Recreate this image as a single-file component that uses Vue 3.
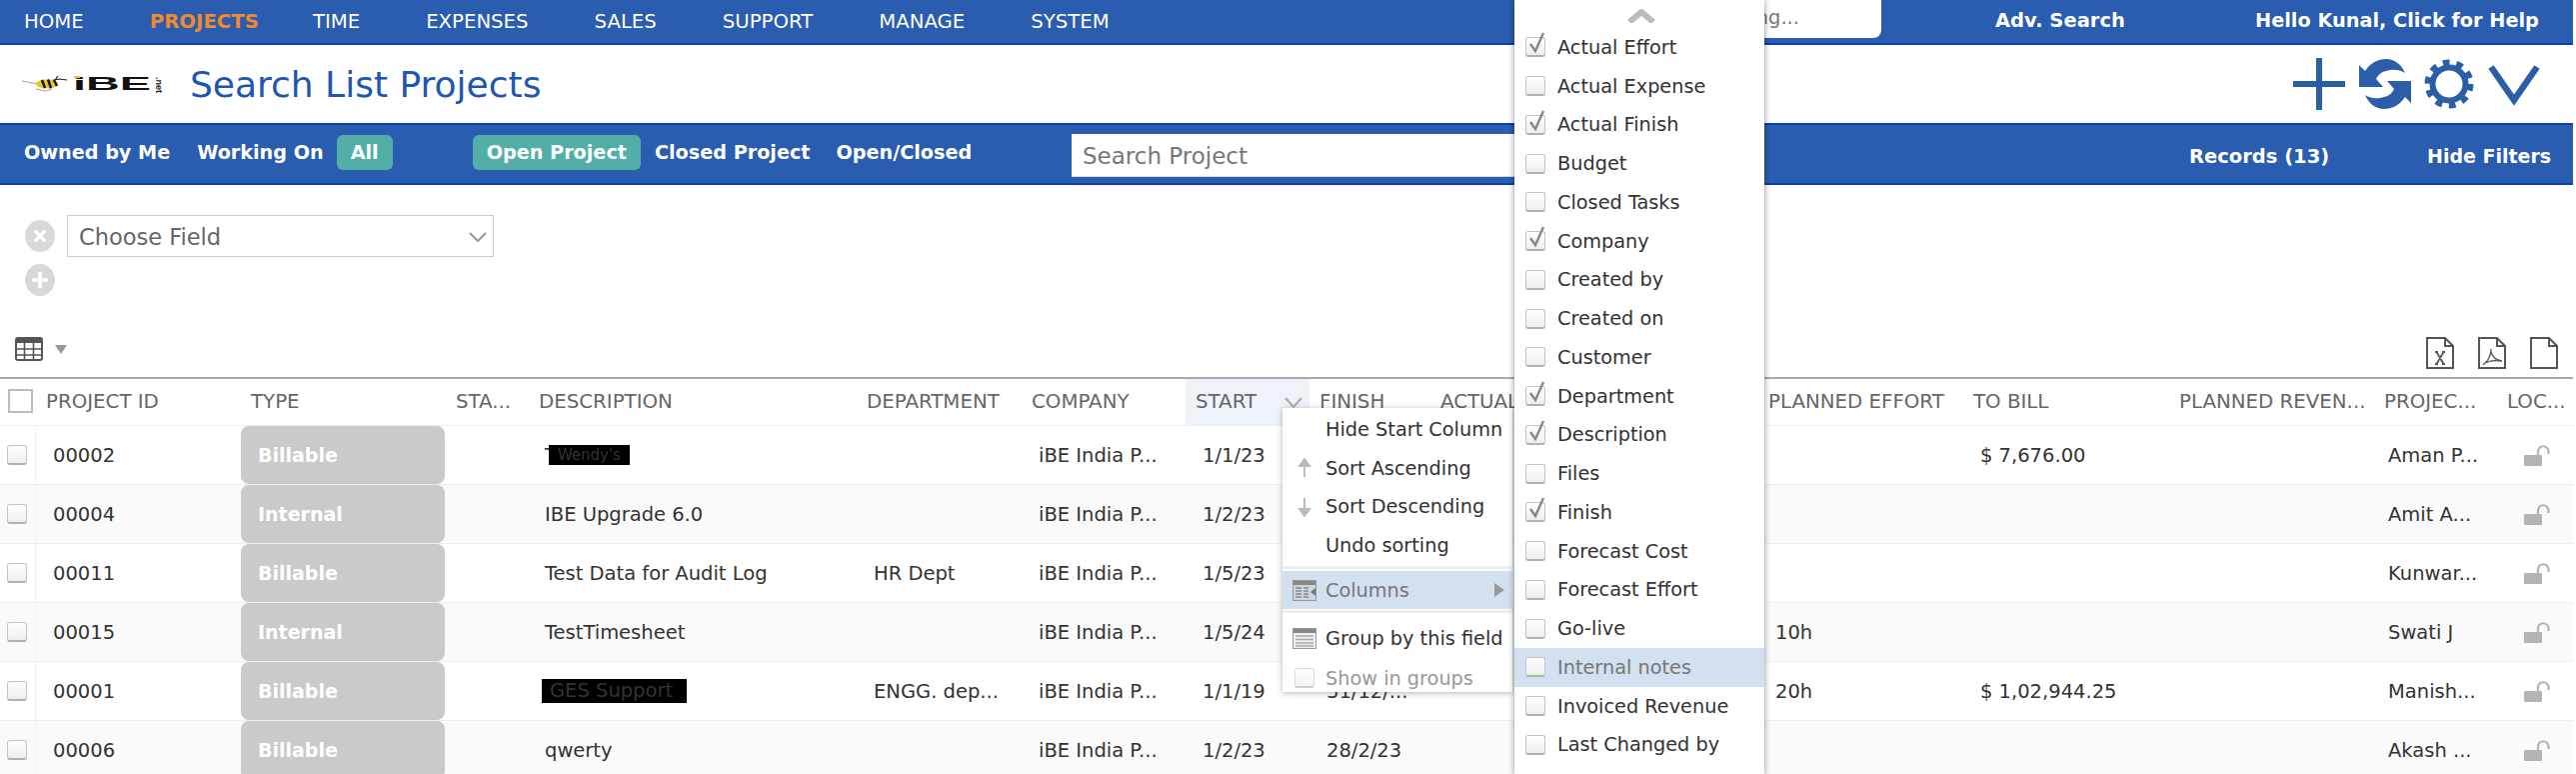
<script setup>
import { ref } from 'vue'

const navItems = ['HOME', 'PROJECTS', 'TIME', 'EXPENSES', 'SALES', 'SUPPORT', 'MANAGE', 'SYSTEM']
const columns = [
  'PROJECT ID', 'TYPE', 'STA...', 'DESCRIPTION', 'DEPARTMENT', 'COMPANY', 'START', 'FINISH',
  'ACTUAL', 'PLANNED EFFORT', 'TO BILL', 'PLANNED REVEN...', 'PROJEC...', 'LOC...'
]

// finish values of the first rows sit behind the open menu
const rows = ref([
  { id: '00002', type: 'Billable', desc: 'T', hidden: 'Wendy\'s', dept: '', start: '1/1/23', finish: '', effort: '', bill: '$ 7,676.00', owner: 'Aman P...' },
  { id: '00004', type: 'Internal', desc: 'IBE Upgrade 6.0', dept: '', start: '1/2/23', finish: '', effort: '', bill: '', owner: 'Amit A...' },
  { id: '00011', type: 'Billable', desc: 'Test Data for Audit Log', dept: 'HR Dept', start: '1/5/23', finish: '', effort: '', bill: '', owner: 'Kunwar...' },
  { id: '00015', type: 'Internal', desc: 'TestTimesheet', dept: '', start: '1/5/24', finish: '', effort: '10h', bill: '', owner: 'Swati J' },
  { id: '00001', type: 'Billable', hiddenOnly: 'GES Support', dept: 'ENGG. dep...', start: '1/1/19', finish: '31/12/...', effort: '20h', bill: '$ 1,02,944.25', owner: 'Manish...' },
  { id: '00006', type: 'Billable', desc: 'qwerty', dept: '', start: '1/2/23', finish: '28/2/23', effort: '', bill: '', owner: 'Akash ...' }
])

const columnOptions = ref([
  { label: 'Actual Effort', on: true },
  { label: 'Actual Expense', on: false },
  { label: 'Actual Finish', on: true },
  { label: 'Budget', on: false },
  { label: 'Closed Tasks', on: false },
  { label: 'Company', on: true },
  { label: 'Created by', on: false },
  { label: 'Created on', on: false },
  { label: 'Customer', on: false },
  { label: 'Department', on: true },
  { label: 'Description', on: true },
  { label: 'Files', on: false },
  { label: 'Finish', on: true },
  { label: 'Forecast Cost', on: false },
  { label: 'Forecast Effort', on: false },
  { label: 'Go-live', on: false },
  { label: 'Internal notes', on: false, hover: true },
  { label: 'Invoiced Revenue', on: false },
  { label: 'Last Changed by', on: false },
  { label: '', on: false }
])
</script>

<template>
  <div class="page">
    <header class="nav">
      <a v-for="item in navItems" :key="item" class="nav-link" :class="{ active: item === 'PROJECTS' }">{{ item }}</a>
      <div class="nav-search">Searching...</div>
      <a class="nav-strong adv">Adv. Search</a>
      <a class="nav-strong hello">Hello Kunal, Click for Help</a>
    </header>

    <div class="title-bar">
      <svg class="logo" viewBox="0 0 146 18" width="146" height="18">
        <path d="M0 6 L16 9 M14 14 L24 16 L30 14" stroke="#888" stroke-width="0.8" fill="none" />
        <path d="M27 6 L37 4 L45 5 M33 5 L36 1" stroke="#222" stroke-width="1.2" fill="none" />
        <ellipse cx="25" cy="9" rx="11" ry="4.6" fill="#e8c91e" />
        <path d="M20 5 L23 13 M26 4.5 L29 13 M32 5 L35 11" stroke="#111" stroke-width="2.4" />
        <text x="51" y="15" class="logo-text" textLength="78" lengthAdjust="spacingAndGlyphs">iBE</text>
        <rect x="52" y="1" width="6" height="2" fill="#f2c81c" />
        <text x="0" y="0" class="logo-net" transform="translate(134 2) rotate(90)">.net</text>
      </svg>
      <h1 class="title">Search List Projects</h1>
      <div class="tools">
        <svg viewBox="0 0 52 52" width="52" height="52"><path d="M0 23h52v6H0zM23 0h6v52h-6z" fill="#2a5fa8" /></svg>
        <svg class="sync" viewBox="0 0 52 52" width="52" height="52" fill="#2a5fa8">
          <path d="M0 7 L6 13 C11 5 19 1 27 1 C35 1 42 6 46 15 C40 11 33 11 27 13 C22 14 19 17 17 21 L24 29 L0 29 Z" />
          <path d="M0 7 L6 13 C11 5 19 1 27 1 C35 1 42 6 46 15 C40 11 33 11 27 13 C22 14 19 17 17 21 L24 29 L0 29 Z" transform="rotate(180 26 26)" />
        </svg>
        <svg viewBox="0 0 52 52" width="52" height="52" fill="none" stroke="#2a5fa8">
          <circle cx="26" cy="26" r="16.5" stroke-width="6" />
          <circle cx="26" cy="26" r="21.5" stroke-width="6" stroke-dasharray="6.75 6.75" />
        </svg>
        <svg viewBox="0 0 52 52" width="52" height="52" fill="none" stroke="#2a5fa8">
          <path d="M3 9 L26 42 L49 9" stroke-width="6.5" />
        </svg>
      </div>
    </div>

    <div class="filter-bar">
      <a class="tab">Owned by Me</a>
      <a class="tab tab-working">Working On</a>
      <a class="tab pill">All</a>
      <a class="tab pill pill-open">Open Project</a>
      <a class="tab tab-closed">Closed Project</a>
      <a class="tab tab-both">Open/Closed</a>
      <div class="search-box">Search Project</div>
      <a class="tab records">Records (13)</a>
      <a class="tab hide-filters">Hide Filters</a>
    </div>

    <section class="filter-panel">
      <div class="filter-row">
        <span class="round-btn">
          <svg viewBox="0 0 30 30" width="20" height="20"><path d="M7 7 L23 23 M23 7 L7 23" stroke="#fff" stroke-width="5" /></svg>
        </span>
        <div class="choose">
          <span>Choose Field</span>
          <svg viewBox="0 0 18 10" width="18" height="10" fill="none"><path d="M1 1 L9 9 L17 1" stroke="#999" stroke-width="2" /></svg>
        </div>
      </div>
      <span class="round-btn add-btn">
        <svg viewBox="0 0 30 30" width="22" height="22"><path d="M15 4 V26 M4 15 H26" stroke="#fff" stroke-width="5" /></svg>
      </span>
    </section>

    <div class="grid-tools">
      <svg class="grid-icon" viewBox="0 0 28 24" width="28" height="24">
        <rect x="1" y="1" width="26" height="22" rx="2" fill="#fff" stroke="#555" stroke-width="2" />
        <rect x="1" y="1" width="26" height="5" fill="#555" />
        <path d="M1 12 H27 M1 18 H27 M9.5 6 V23 M18.5 6 V23" stroke="#555" stroke-width="1.6" />
      </svg>
      <span class="caret"></span>
      <div class="export">
        <svg viewBox="0 0 28 32" width="28" height="32" fill="none" stroke="#555" stroke-width="2">
          <path d="M1 1 H19 L27 9 V31 H1 Z M19 1 V9 H27" />
          <path d="M9 15 H12 M16 15 H19 M9 27 H12 M16 27 H19 M10.5 15 L17.5 27 M17.5 15 L10.5 27" stroke-width="1.8" />
        </svg>
        <svg viewBox="0 0 28 32" width="28" height="32" fill="none" stroke="#555" stroke-width="2">
          <path d="M1 1 H19 L27 9 V31 H1 Z M19 1 V9 H27" />
          <path d="M13 12 C13 18 10 24 5 28 M13 15 C15 21 18 23 24 24 C18 23 11 24 7 26" stroke-width="1.3" />
        </svg>
        <svg viewBox="0 0 28 32" width="28" height="32" fill="none" stroke="#555" stroke-width="2">
          <path d="M1 1 H19 L27 9 V31 H1 Z M19 1 V9 H27" />
        </svg>
      </div>
    </div>

    <div class="table">
      <div class="row head">
        <div class="cell check-cell"><span class="box box-head"></span></div>
        <div v-for="col in columns" :key="col" class="cell" :class="{ sorted: col === 'START' }">
          {{ col }}
          <svg v-if="col === 'START'" class="head-chevron" viewBox="0 0 18 12" width="18" height="12" fill="none">
            <path d="M1 1 L9 10 L17 1" stroke="#aaa" stroke-width="2" />
          </svg>
        </div>
      </div>
      <div v-for="(row, i) in rows" :key="row.id" class="row body-row" :class="{ odd: i % 2 === 1 }">
        <div class="cell check-cell line"><span class="box"></span></div>
        <div class="cell val">{{ row.id }}</div>
        <div class="cell badge-cell"><span class="badge">{{ row.type }}</span></div>
        <div class="cell val"></div>
        <div class="cell val desc">
          {{ row.desc }}<span v-if="row.hidden" class="blackout small">{{ row.hidden }}</span>
          <span v-if="row.hiddenOnly" class="blackout big">{{ row.hiddenOnly }}</span>
        </div>
        <div class="cell val">{{ row.dept }}</div>
        <div class="cell val">iBE India P...</div>
        <div class="cell val">{{ row.start }}</div>
        <div class="cell val">{{ row.finish }}</div>
        <div class="cell val"></div>
        <div class="cell val">{{ row.effort }}</div>
        <div class="cell val">{{ row.bill }}</div>
        <div class="cell val"></div>
        <div class="cell val owner">{{ row.owner }}</div>
        <div class="cell lock-cell">
          <svg viewBox="0 0 26 21" width="26" height="21" fill="none">
            <rect x="0" y="10" width="18" height="11" rx="1" fill="#b4b4b4" />
            <path d="M14 10 V6.5 A5 5 0 0 1 24.5 6.5 V9" stroke="#b4b4b4" stroke-width="2.2" />
          </svg>
        </div>
      </div>
    </div>

    <!-- header context menu, sits over the table -->
    <div class="menu">
      <div class="menu-item"><span class="menu-ico"></span>Hide Start Column</div>
      <div class="menu-item">
        <span class="menu-ico">
          <svg viewBox="0 0 14 20" width="14" height="20"><path d="M7 19 V6 M2 8 L7 1 L12 8 Z" stroke="#bbb" stroke-width="2" fill="#bbb" /></svg>
        </span>
        Sort Ascending
      </div>
      <div class="menu-item">
        <span class="menu-ico">
          <svg viewBox="0 0 14 20" width="14" height="20"><path d="M7 1 V14 M2 12 L7 19 L12 12 Z" stroke="#bbb" stroke-width="2" fill="#bbb" /></svg>
        </span>
        Sort Descending
      </div>
      <div class="menu-item"><span class="menu-ico"></span>Undo sorting</div>
      <div class="menu-sep"></div>
      <div class="menu-item active">
        <span class="menu-ico">
          <svg viewBox="0 0 24 21" width="24" height="21">
            <rect x="0.5" y="0.5" width="23" height="20" fill="#ccd6e2" stroke="#999" />
            <rect x="1" y="1" width="22" height="4" fill="#888" />
            <path d="M3 8 H9 M3 11 H9 M3 14 H9 M3 17 H9 M11 8 H16 M11 11 H16 M11 14 H16 M11 17 H16" stroke="#888" stroke-width="1.4" />
            <path d="M23 8 L18 12 L23 16 Z" fill="#777" />
          </svg>
        </span>
        Columns
        <span class="sub-arrow"></span>
      </div>
      <div class="menu-sep sep-low"></div>
      <div class="menu-item dark">
        <span class="menu-ico">
          <svg viewBox="0 0 24 21" width="24" height="21">
            <rect x="0.5" y="0.5" width="23" height="20" fill="#eee" stroke="#999" />
            <rect x="1" y="1" width="22" height="4" fill="#888" />
            <path d="M3 8 H21 M3 11.5 H21 M3 15 H21 M3 18 H21" stroke="#aaa" stroke-width="1.4" />
          </svg>
        </span>
        Group by this field
      </div>
      <div class="menu-item muted">
        <span class="menu-ico"><span class="box box-faint"></span></span>
        Show in groups
      </div>
    </div>

    <!-- columns submenu, full height of the window -->
    <div class="col-menu">
      <svg class="col-up" viewBox="0 0 28 14" width="28" height="14" fill="none">
        <path d="M2 13 L14 3 L26 13" stroke="#bbb" stroke-width="6" />
      </svg>
      <div v-for="opt in columnOptions" :key="opt.label" class="col-item" :class="{ hover: opt.hover }">
        <span class="box">
          <svg v-if="opt.on" class="tick" viewBox="0 0 20 24" width="20" height="24" fill="none">
            <path d="M4 13 L9 20 L17 2" stroke="#888" stroke-width="2.4" />
          </svg>
        </span>
        {{ opt.label }}
      </div>
    </div>
  </div>
</template>

<style scoped>
.page {
  position: relative;
  width: 2574px;
  height: 774px;
  overflow: hidden;
  background: #fff;
  color: #333;
  font-family: "DejaVu Sans", sans-serif;
  font-size: 19.5px;
}

.nav {
  display: flex;
  align-items: center;
  height: 45px;
  padding-left: 24px;
  background: #2a5cb0;
  border-bottom: 2px solid #0f3fae;
  box-sizing: border-box;
  color: #fff;
}

.nav-link {
  margin-right: 66px;
  font-size: 19.7px;
  white-space: nowrap;
}

.nav-link.active {
  margin-right: 54px;
  color: #f08a2c;
  font-weight: 700;
}

.nav-search {
  position: absolute;
  left: 1600px;
  top: 0;
  width: 282px;
  height: 38px;
  box-sizing: border-box;
  padding: 6px 82px 0 0;
  background: #fff;
  border-radius: 0 0 8px 0;
  color: #777;
  text-align: right;
  white-space: nowrap;
}

.nav-strong {
  font-weight: 700;
  white-space: nowrap;
}

.adv {
  position: absolute;
  left: 1996px;
  top: 9px;
}

.hello {
  position: absolute;
  left: 2256px;
  top: 9px;
  font-size: 19.3px;
}

.title-bar {
  display: flex;
  align-items: center;
  height: 78px;
  padding-left: 22px;
}

.logo-text {
  font-family: "Liberation Sans", sans-serif;
  font-size: 19px;
  font-weight: 700;
  fill: #111;
}

.logo-net {
  font-family: "Liberation Sans", sans-serif;
  font-size: 9px;
  font-weight: 700;
  fill: #222;
}

.title {
  margin: 0 0 0 22px;
  color: #1f56b0;
  font-size: 36px;
  font-weight: 400;
}

.tools {
  display: flex;
  gap: 13px;
  margin-left: auto;
  margin-right: 33px;
}

.sync {
  position: relative;
  left: 1px;
}

.filter-bar {
  position: relative;
  display: flex;
  align-items: center;
  height: 62px;
  padding: 0 0 3px 24px;
  box-sizing: border-box;
  background: #2a5cb0;
  border-top: 2px solid #0f3fae;
  border-bottom: 2px solid #0f3fae;
}

.tab {
  color: #fff;
  font-size: 19.2px;
  font-weight: 700;
  white-space: nowrap;
}

.tab-working {
  margin-left: 27px;
}

.pill {
  padding: 6px 14px;
  border-radius: 6px;
  background: #52afa8;
}

.tab.pill {
  margin-left: 13px;
}

.tab.pill-open {
  margin-left: 80px;
}

.tab-closed {
  margin-left: 14px;
}

.tab-both {
  margin-left: 26px;
}

.search-box {
  position: absolute;
  left: 1072px;
  top: 9px;
  width: 500px;
  height: 43px;
  padding: 9px 11px 0;
  box-sizing: border-box;
  background: #fff;
  border-bottom: 1px solid #cfdcf0;
  color: #777;
  font-size: 23px;
}

.records {
  position: absolute;
  left: 2190px;
  top: 20px;
  font-size: 19.5px;
}

.hide-filters {
  position: absolute;
  left: 2428px;
  top: 20px;
  font-size: 19px;
}

.filter-panel {
  height: 150px;
  padding: 30px 0 0 25px;
  box-sizing: border-box;
}

.filter-row {
  display: flex;
  align-items: center;
  gap: 12px;
}

.round-btn {
  display: flex;
  align-items: center;
  justify-content: center;
  width: 30px;
  height: 32px;
  border-radius: 50%;
  background: #d9d9d9;
}

.add-btn {
  margin-top: 7px;
}

.choose {
  display: flex;
  align-items: center;
  justify-content: space-between;
  width: 427px;
  height: 42px;
  padding: 1px 6px 0 11px;
  box-sizing: border-box;
  border: 1px solid #ccc;
  color: #666;
  font-size: 22.5px;
}

.grid-tools {
  position: relative;
  display: flex;
  align-items: flex-start;
  height: 42px;
  padding-left: 15px;
  padding-top: 2px;
  box-sizing: border-box;
}

.caret {
  width: 0;
  height: 0;
  margin: 8px 0 0 12px;
  border-left: 6px solid transparent;
  border-right: 6px solid transparent;
  border-top: 9px solid #999;
}

.export {
  display: flex;
  gap: 24px;
  margin-left: auto;
  margin-right: 15px;
}

.table {
  border-top: 2px solid #aaa;
}

.row {
  display: grid;
  grid-template-columns: 36px 205px 205px 83px 328px 165px 164px 124px 121px 328px 205px 206px 205px 123px 76px;
}

.head {
  height: 46px;
  color: #666;
  font-size: 19.8px;
}

.cell {
  position: relative;
  display: flex;
  align-items: center;
  padding-left: 10px;
  box-sizing: border-box;
  overflow: hidden;
  white-space: nowrap;
}

.head .cell {
  padding-bottom: 2px;
}

.sorted {
  background: #eef3fa;
}

.head-chevron {
  position: absolute;
  left: 99px;
  top: 18px;
}

.body-row {
  height: 59px;
  border-top: 1px solid #eee;
  box-sizing: border-box;
}

.body-row.odd {
  background: #fafafa;
}

.val {
  padding-left: 17px;
}

.val.desc {
  padding-left: 16px;
}

.val.owner {
  padding-left: 14px;
}

.check-cell {
  padding-left: 7px;
}

.line {
  border-right: 1px solid #f0f0f0;
}

.badge-cell {
  padding: 0;
  align-items: stretch;
  overflow: visible;
}

.badge {
  display: flex;
  align-items: center;
  width: 204px;
  padding-left: 17px;
  box-sizing: border-box;
  border-radius: 8px;
  background: #cacaca;
  color: #fff;
  font-size: 19px;
  font-weight: 700;
}

.lock-cell {
  padding-left: 27px;
}

.blackout {
  background: #000;
  color: #333;
}

.small {
  display: flex;
  align-items: center;
  justify-content: center;
  width: 81px;
  height: 20px;
  margin-left: -8px;
  font-size: 15px;
}

.big {
  margin-left: -3px;
  padding: 0 8px;
  line-height: 24px;
  width: 145px;
  box-sizing: border-box;
  overflow: hidden;
}

.box {
  position: relative;
  display: inline-block;
  flex: none;
  width: 20px;
  height: 20px;
  box-sizing: border-box;
  border: 1px solid #c4c4c4;
  border-bottom: 2px solid #b0b0b0;
  border-radius: 3px;
  background: linear-gradient(#fff, #eee);
}

.box-head {
  width: 25px;
  height: 24px;
  margin-left: 1px;
  border: 2px solid #bbb;
  border-radius: 0;
  background: #fff;
}

.box-faint {
  opacity: 0.6;
}

.tick {
  position: absolute;
  left: 0;
  top: -7px;
}

.menu {
  position: absolute;
  left: 1283px;
  top: 408px;
  width: 230px;
  height: 284px;
  padding-top: 2px;
  box-sizing: border-box;
  background: #fff;
  box-shadow: 0 1px 6px rgba(0, 0, 0, 0.3);
  font-size: 19.3px;
}

.menu-item {
  display: flex;
  align-items: center;
  height: 38.8px;
  padding-left: 10px;
  white-space: nowrap;
}

.menu-item.active {
  height: 38px;
  background: #d3e0f0;
  color: #777;
}

.menu-item.dark {
  height: 48px;
  padding-top: 1px;
  box-sizing: border-box;
}

.menu-item.muted {
  height: 32px;
  color: #999;
}

.menu-ico {
  display: flex;
  justify-content: center;
  flex: none;
  width: 24px;
  margin-right: 9px;
}

.menu-sep {
  height: 3px;
  margin: 1px 0 2px;
  background: #eee;
}

.menu-sep.sep-low {
  margin: 1px 0 1px;
}

.sub-arrow {
  position: absolute;
  right: 8px;
  width: 0;
  height: 0;
  border-top: 7px solid transparent;
  border-bottom: 7px solid transparent;
  border-left: 10px solid #999;
}

.col-menu {
  position: absolute;
  left: 1515px;
  top: 0;
  width: 250px;
  height: 774px;
  padding-top: 9px;
  box-sizing: border-box;
  overflow: hidden;
  background: #fff;
  box-shadow: 0 0 6px rgba(0, 0, 0, 0.45);
  font-size: 19.3px;
}

.col-up {
  display: block;
  margin: 0 0 5px 113px;
}

.col-item {
  display: flex;
  align-items: center;
  gap: 12px;
  height: 38.76px;
  padding-left: 11px;
  color: #333;
  white-space: nowrap;
}

.col-item.hover {
  background: #d3e0f0;
  color: #777;
}
</style>

<style>
html,
body {
  margin: 0;
  background: #fff;
}
</style>
